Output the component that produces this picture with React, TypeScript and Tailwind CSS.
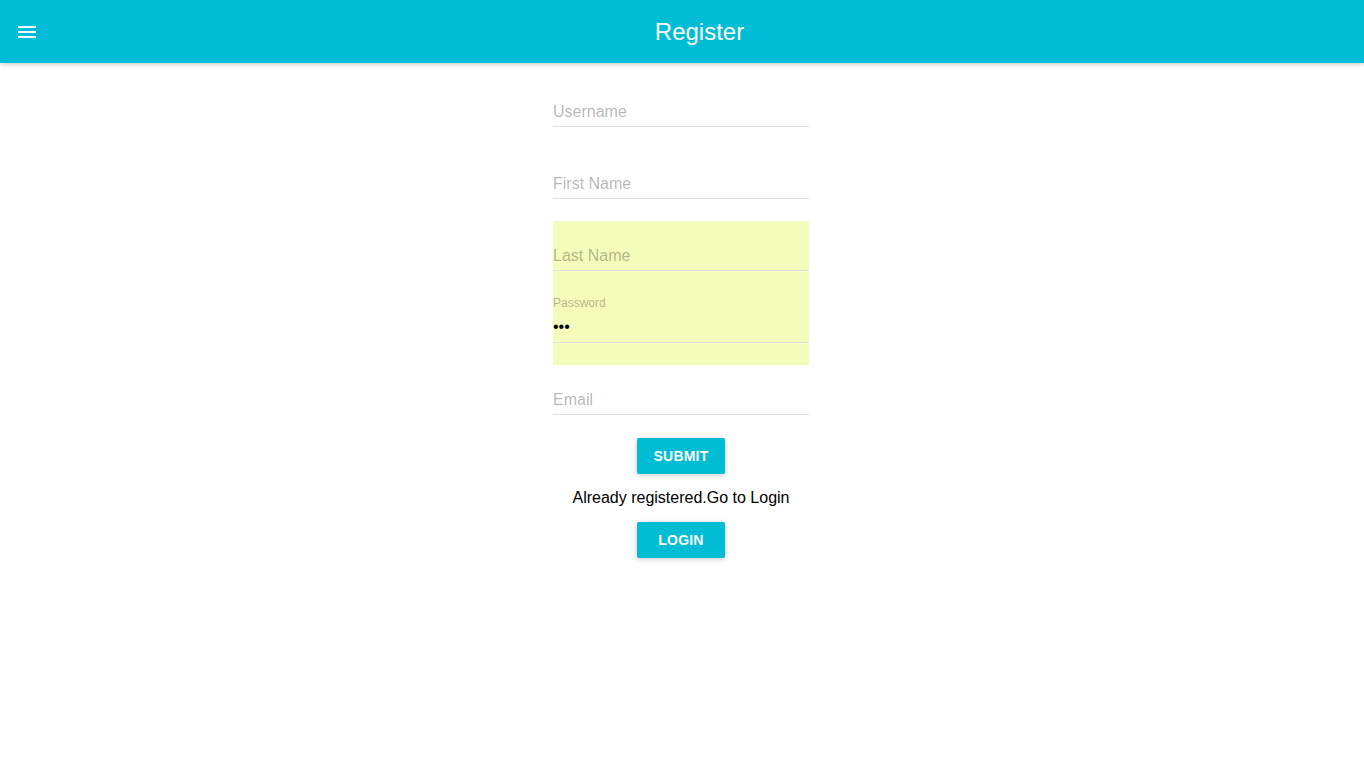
import { useState } from 'react';

type FieldProps = {
  label: string;
  value?: string;
  autofilled?: boolean;
};

function Field({ label, value, autofilled }: FieldProps) {
  const filled = !!value;
  return (
    <div className="relative h-[72px] w-[256px]">
      {autofilled && <div className="absolute left-0 right-0 top-[14px] h-[72px] bg-[#f4fcbb]" />}
      <label
        className={
          filled
            ? 'absolute left-0 top-[13px] text-[12px] leading-[22px] text-black/30'
            : 'absolute left-0 top-[38px] text-[16px] leading-[22px] text-black/30'
        }
      >
        {label}
      </label>
      {filled && (
        <div className="absolute left-0 top-[37px] text-[16px] leading-[22px] text-black">{value}</div>
      )}
      <div className="absolute bottom-[8px] left-0 right-0 border-b border-[#e0e0e0]" />
    </div>
  );
}

function Btn({ children }: { children: string }) {
  return (
    <button className="h-[36px] min-w-[88px] rounded-[2px] bg-[#00bcd4] px-4 text-[14px] font-bold uppercase tracking-[0.2px] text-white shadow-[0_1px_6px_rgba(0,0,0,0.12),0_1px_4px_rgba(0,0,0,0.12)]">
      {children}
    </button>
  );
}

export default function App() {
  const [open, setOpen] = useState(false);

  return (
    <div className="min-h-[770px] bg-white font-['Liberation_Sans',Arial,sans-serif]">
      <header className="relative z-10 flex h-[63px] items-center bg-[#00bcd4] shadow-[0_1px_6px_rgba(0,0,0,0.12),0_1px_4px_rgba(0,0,0,0.12)]">
        <button onClick={() => setOpen(!open)} className="ml-[15px] flex h-[24px] w-[24px] items-center justify-center">
          <svg viewBox="0 0 24 24" width="24" height="24" fill="#fff">
            <path d="M3 18h18v-2H3v2zm0-5h18v-2H3v2zm0-7v2h18V6H3z" />
          </svg>
        </button>
        <h1 className="flex-1 pr-[4px] text-center text-[24px] leading-[63px] text-white">Register</h1>
      </header>

      <main className="flex flex-col items-center pr-[2px]">
        <div className="flex w-[256px] flex-col">
          <Field label="Username" />
          <Field label="First Name" />
          <Field label="Last Name" autofilled />
          <Field label="Password" value="•••" autofilled />
          <Field label="Email" />
        </div>
        <div className="mt-[15px]">
          <Btn>Submit</Btn>
        </div>
        <p className="mt-[14px] text-[16px] leading-[20px] text-black">Already registered.Go to Login</p>
        <div className="mt-[14px]">
          <Btn>Login</Btn>
        </div>
      </main>
    </div>
  );
}
